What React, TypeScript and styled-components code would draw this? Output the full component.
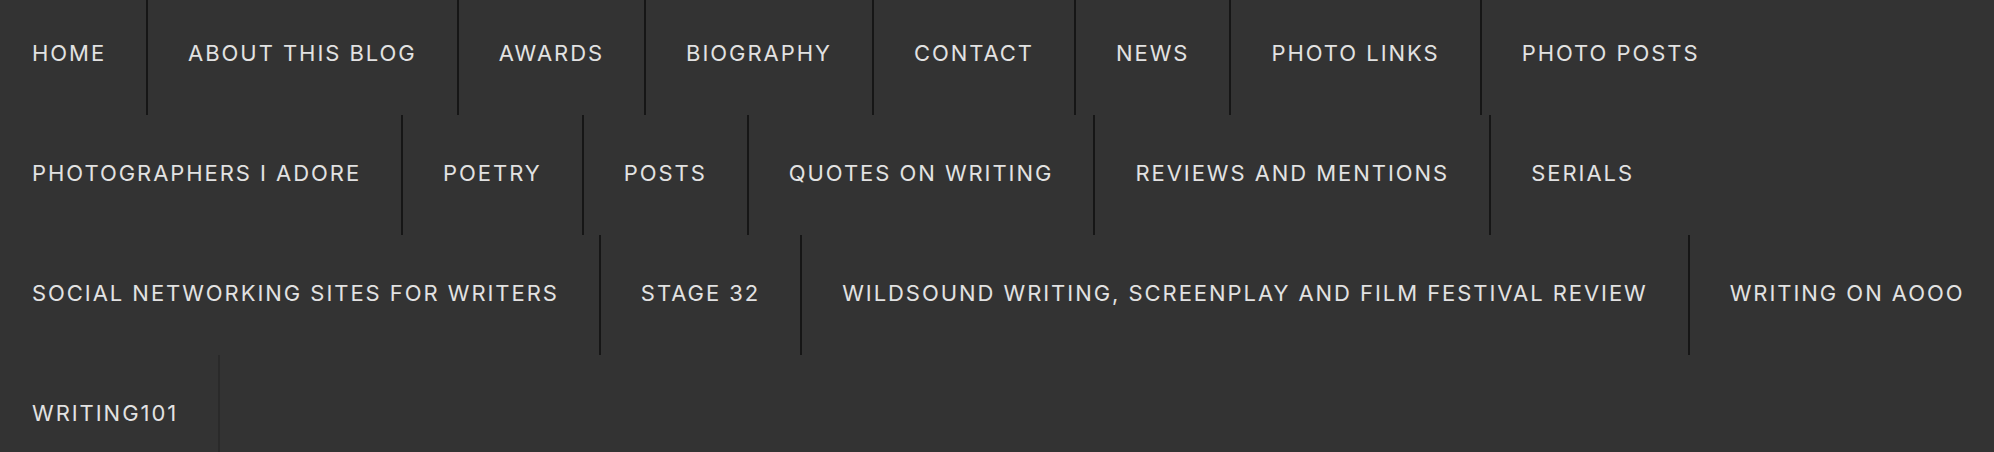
import React from 'react';
import styled, { createGlobalStyle } from 'styled-components';

const GlobalStyle = createGlobalStyle`
  html, body {
    margin: 0;
    padding: 0;
    height: 452px;
    background: #333333;
    overflow: hidden;
  }
`;

const Nav = styled.nav`
  width: 100%;
  height: 452px;
  overflow: hidden;
  background: #333333;
`;

const Menu = styled.ul`
  display: flex;
  flex-wrap: wrap;
  list-style: none;
  margin: -5px -80px 0 -10px;
  padding: 0;
`;

const MenuItem = styled.li<{ $muted?: boolean }>`
  height: 120px;
  min-width: ${(p) => (p.$muted ? '40px' : '0')};
  border-left: 2px solid ${(p) => (p.$muted ? '#2a2a2a' : '#161616')};
`;

const MenuLink = styled.a`
  display: flex;
  align-items: center;
  box-sizing: border-box;
  height: 100%;
  padding: 0 40px 4px;
  color: #e2e2e2;
  font-family: Inter, "Open Sans", sans-serif;
  font-weight: 400;
  font-size: 22px;
  letter-spacing: 1.95px;
  text-transform: uppercase;
  text-decoration: none;
  white-space: nowrap;
`;

const items = [
  'Home',
  'About this blog',
  'Awards',
  'Biography',
  'Contact',
  'News',
  'Photo Links',
  'Photo Posts',
  'Photographers I Adore',
  'Poetry',
  'Posts',
  'Quotes on Writing',
  'Reviews and Mentions',
  'Serials',
  'Social Networking Sites for Writers',
  'Stage 32',
  'Wildsound Writing, Screenplay and Film Festival Review',
  'Writing on AOOO',
  'Writing101',
];

export default function App() {
  return (
    <>
      <GlobalStyle />
      <Nav>
        <Menu>
          {items.map((label) => (
            <MenuItem key={label}>
              <MenuLink href="#">{label}</MenuLink>
            </MenuItem>
          ))}
          <MenuItem $muted aria-hidden="true" />
        </Menu>
      </Nav>
    </>
  );
}
